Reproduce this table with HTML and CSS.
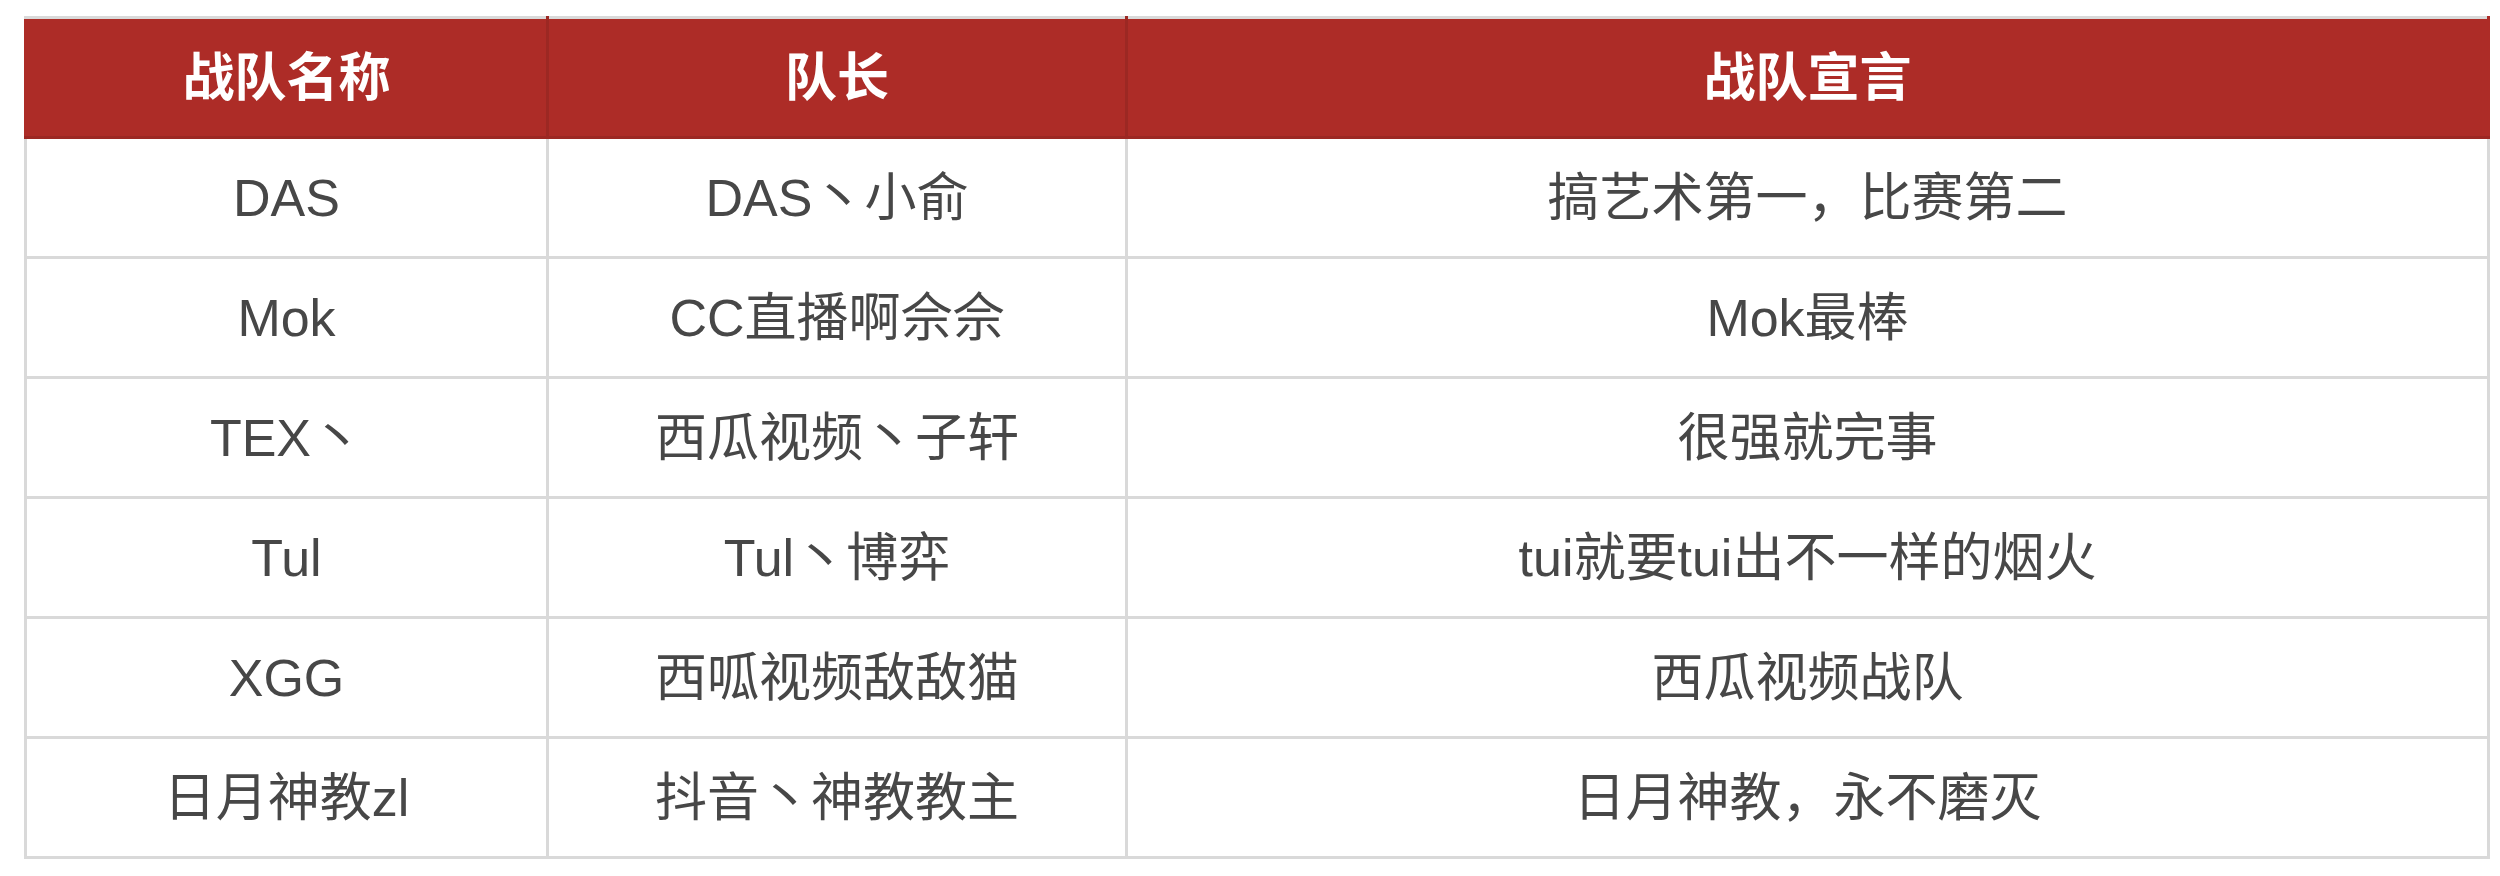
FILE: index.html
```html
<!DOCTYPE html>
<html lang="zh-CN">
<head>
<meta charset="utf-8">
<title>战队</title>
<link rel="stylesheet" href="styles.css">
</head>
<body>
<table class="teams">
  <colgroup>
    <col class="c-name">
    <col class="c-lead">
    <col class="c-motto">
  </colgroup>
  <thead>
    <tr><th>战队名称</th><th>队长</th><th>战队宣言</th></tr>
  </thead>
  <tbody>
    <tr><td>DAS</td><td>DAS丶小俞</td><td>搞艺术第一，比赛第二</td></tr>
    <tr><td>Mok</td><td>CC直播啊佘佘</td><td>Mok最棒</td></tr>
    <tr><td>TEX丶</td><td>西瓜视频丶子轩</td><td>很强就完事</td></tr>
    <tr><td>Tul</td><td>Tul丶博弈</td><td>tui就要tui出不一样的烟火</td></tr>
    <tr><td>XGG</td><td>西呱视频敌敌猫</td><td>西瓜视频战队</td></tr>
    <tr><td>日月神教zl</td><td>抖音丶神教教主</td><td>日月神教，永不磨灭</td></tr>
  </tbody>
</table>
</body>
</html>
```

FILE: styles.css
```css
html, body {
  margin: 0;
  padding: 0;
  background: #ffffff;
}

body {
  padding: 16px 0 0 24px;
  font-family: "Liberation Sans", "Noto Sans CJK SC", sans-serif;
}

.teams {
  border-collapse: collapse;
  table-layout: fixed;
  width: 2463px;
  border: 3px solid #d9d9d9;
}

.c-name { width: 522px; }
.c-lead { width: 579px; }
.c-motto { width: 1362px; }

.teams th,
.teams td {
  padding: 0;
  text-align: center;
  vertical-align: middle;
  font-size: 52px;
  line-height: 1;
}

.teams th {
  height: 117px;
  background: #ad2c27;
  color: #ffffff;
  font-weight: bold;
  border: 3px solid #9c2823;
  border-top-color: #d9d9d9;
}

.teams th:first-child { border-left-color: #ad2c27; }
.teams th:last-child { border-right-color: #ad2c27; }

.teams td {
  height: 117px;
  color: #474747;
  border: 3px solid #d9d9d9;
  background: #ffffff;
}
```
